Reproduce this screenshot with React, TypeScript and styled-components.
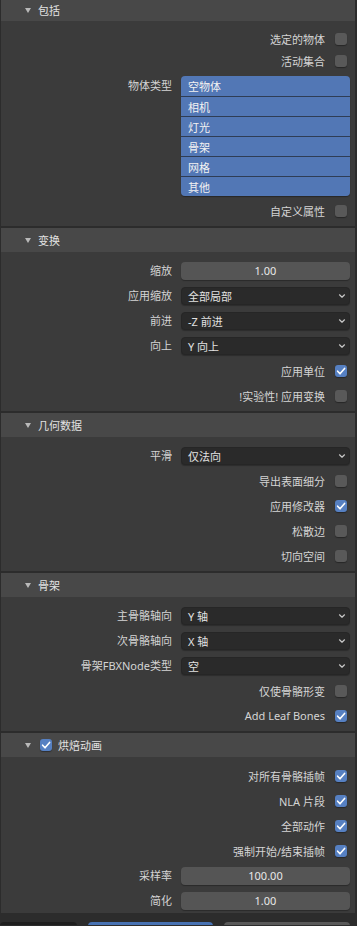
import React from "react";
import styled, { createGlobalStyle } from "styled-components";

const GlobalStyle = createGlobalStyle`
  html, body {
    margin: 0;
    padding: 0;
    background: #2c2c2c;
  }
  body {
    font-family: "Noto Sans", "Noto Sans CJK SC", sans-serif;
    font-size: 11px;
  }
`;

const Page = styled.div`
  width: 357px;
  height: 926px;
  overflow: hidden;
  background: #2c2c2c;
  padding-left: 1px;
  box-sizing: border-box;
`;

const Panel = styled.section`
  width: 354px;
  margin-bottom: 2px;
`;

const Header = styled.div<{ $h?: number }>`
  height: ${(p) => p.$h ?? 24}px;
  background: #484848;
  display: flex;
  align-items: center;
  padding-left: 24px;
  color: #e2e2e2;
  line-height: 1;
`;

const Triangle = styled.svg`
  width: 6px;
  height: 5px;
  margin-right: 7px;
  flex: none;
`;

const Body = styled.div<{ $pt?: number; $pb?: number }>`
  background: #3b3b3b;
  padding-top: ${(p) => p.$pt ?? 6}px;
  padding-bottom: ${(p) => p.$pb ?? 3}px;
`;

const FieldRow = styled.div<{ $mt?: number }>`
  height: 25px;
  display: grid;
  grid-template-columns: 171px 169px;
  column-gap: 9px;
  align-items: center;
  margin-top: ${(p) => p.$mt ?? 0}px;
`;

const ListRow = styled.div`
  display: grid;
  grid-template-columns: 171px 169px;
  column-gap: 9px;
  align-items: start;
  margin-top: 4px;
`;

const Label = styled.span<{ $lh?: number }>`
  text-align: right;
  color: #d4d4d4;
  white-space: nowrap;
  line-height: ${(p) => p.$lh ?? 14}px;
`;

const CheckRow = styled.div<{ $h?: number; $mt?: number }>`
  height: ${(p) => p.$h ?? 25}px;
  margin-top: ${(p) => p.$mt ?? 0}px;
  display: flex;
  justify-content: flex-end;
  align-items: center;
  gap: 10px;
  padding-right: 8px;
  color: #d4d4d4;
  white-space: nowrap;
`;

const Box = styled.span<{ $on?: boolean }>`
  width: 12px;
  height: 12px;
  border-radius: 3px;
  background: ${(p) => (p.$on ? "#5680c2" : "#595959")};
  box-shadow: 0 1px 1px rgba(0, 0, 0, 0.35);
  display: flex;
  align-items: center;
  justify-content: center;
  flex: none;
`;

const HeaderBox = styled(Box)`
  margin-left: 2px;
  margin-right: 6px;
`;

const NumberField = styled.div`
  height: 18px;
  border-radius: 4px;
  background: #555555;
  color: #e8e8e8;
  display: flex;
  align-items: center;
  justify-content: center;
  box-shadow: 0 1px 1px rgba(0, 0, 0, 0.3);
`;

const Dropdown = styled.div`
  height: 18px;
  box-sizing: border-box;
  border-radius: 4px;
  background: #2a2a2a;
  border: 1px solid #262626;
  color: #e2e2e2;
  display: flex;
  align-items: center;
  justify-content: space-between;
  padding: 0 3px 0 6px;
  box-shadow: 0 1px 1px rgba(0, 0, 0, 0.25);
`;

const List = styled.div`
  border-radius: 4px;
  overflow: hidden;
  box-shadow: 0 1px 1px rgba(0, 0, 0, 0.35);
`;

const ListItem = styled.div`
  height: 20px;
  box-sizing: border-box;
  background: #5277b5;
  color: #f2f2f2;
  padding-left: 7px;
  display: flex;
  align-items: center;
  & + & {
    border-top: 1px solid #2f3d55;
  }
`;

const Footer = styled.div`
  height: 12px;
  margin-left: -1px;
  padding-top: 9px;
  box-sizing: border-box;
  display: flex;
  gap: 11px;
  overflow: hidden;
  background: #2c2c2c;
`;

const FooterButton = styled.div<{ $w: number; $bg: string }>`
  width: ${(p) => p.$w}px;
  height: 20px;
  flex: none;
  border-radius: 4px;
  background: ${(p) => p.$bg};
`;

function Check() {
  return (
    <svg width="12" height="12" viewBox="0 0 12 12">
      <polyline
        points="2.6,6.2 5,8.8 9.6,3.4"
        fill="none"
        stroke="#ffffff"
        strokeWidth="1.6"
        strokeLinecap="round"
        strokeLinejoin="round"
      />
    </svg>
  );
}

function Chevron() {
  return (
    <svg width="8" height="6" viewBox="0 0 8 6">
      <polyline
        points="1.5,1.8 4,4.2 6.5,1.8"
        fill="none"
        stroke="#c8c8c8"
        strokeWidth="1.2"
        strokeLinecap="round"
        strokeLinejoin="round"
      />
    </svg>
  );
}

function Caret() {
  return (
    <Triangle viewBox="0 0 6 5">
      <polygon points="0,0 6,0 3,5" fill="#b9b9b9" />
    </Triangle>
  );
}

type Row =
  | { kind: "check"; label: string; on?: boolean }
  | { kind: "number"; label: string; value: string }
  | { kind: "enum"; label: string; value: string };

function Rows({ rows }: { rows: Row[] }) {
  return (
    <>
      {rows.map((r, i) =>
        r.kind === "check" ? (
          <CheckRow key={i}>
            <span>{r.label}</span>
            <Box $on={r.on}>{r.on && <Check />}</Box>
          </CheckRow>
        ) : (
          <FieldRow key={i}>
            <Label>{r.label}</Label>
            {r.kind === "number" ? (
              <NumberField>{r.value}</NumberField>
            ) : (
              <Dropdown>
                <span>{r.value}</span>
                <Chevron />
              </Dropdown>
            )}
          </FieldRow>
        )
      )}
    </>
  );
}

const objectTypes = ["空物体", "相机", "灯光", "骨架", "网格", "其他"];

const transformRows: Row[] = [
  { kind: "number", label: "缩放", value: "1.00" },
  { kind: "enum", label: "应用缩放", value: "全部局部" },
  { kind: "enum", label: "前进", value: "-Z 前进" },
  { kind: "enum", label: "向上", value: "Y 向上" },
  { kind: "check", label: "应用单位", on: true },
  { kind: "check", label: "!实验性! 应用变换" },
];

const geometryRows: Row[] = [
  { kind: "enum", label: "平滑", value: "仅法向" },
  { kind: "check", label: "导出表面细分" },
  { kind: "check", label: "应用修改器", on: true },
  { kind: "check", label: "松散边" },
  { kind: "check", label: "切向空间" },
];

const armatureRows: Row[] = [
  { kind: "enum", label: "主骨骼轴向", value: "Y 轴" },
  { kind: "enum", label: "次骨骼轴向", value: "X 轴" },
  { kind: "enum", label: "骨架FBXNode类型", value: "空" },
  { kind: "check", label: "仅使骨骼形变" },
  { kind: "check", label: "Add Leaf Bones", on: true },
];

const bakeRows: Row[] = [
  { kind: "check", label: "对所有骨骼插帧", on: true },
  { kind: "check", label: "NLA 片段", on: true },
  { kind: "check", label: "全部动作", on: true },
  { kind: "check", label: "强制开始/结束插帧", on: true },
  { kind: "number", label: "采样率", value: "100.00" },
  { kind: "number", label: "简化", value: "1.00" },
];

export default function App() {
  return (
    <>
      <GlobalStyle />
      <Page>
        <Panel>
          <Header $h={21}>
            <Caret />
            <span>包括</span>
          </Header>
          <Body $pt={7} $pb={3}>
            <CheckRow $h={22}>
              <span>选定的物体</span>
              <Box />
            </CheckRow>
            <CheckRow $h={22}>
              <span>活动集合</span>
              <Box />
            </CheckRow>
            <ListRow>
              <Label $lh={20}>物体类型</Label>
              <List>
                {objectTypes.map((t) => (
                  <ListItem key={t}>{t}</ListItem>
                ))}
              </List>
            </ListRow>
            <CheckRow $mt={2}>
              <span>自定义属性</span>
              <Box />
            </CheckRow>
          </Body>
        </Panel>

        <Panel>
          <Header>
            <Caret />
            <span>变换</span>
          </Header>
          <Body>
            <Rows rows={transformRows} />
          </Body>
        </Panel>

        <Panel>
          <Header>
            <Caret />
            <span>几何数据</span>
          </Header>
          <Body>
            <Rows rows={geometryRows} />
          </Body>
        </Panel>

        <Panel>
          <Header>
            <Caret />
            <span>骨架</span>
          </Header>
          <Body>
            <Rows rows={armatureRows} />
          </Body>
        </Panel>

        <Panel style={{ marginBottom: 0 }}>
          <Header>
            <Caret />
            <HeaderBox $on>
              <Check />
            </HeaderBox>
            <span>烘焙动画</span>
          </Header>
          <Body $pb={0}>
            <Rows rows={bakeRows} />
          </Body>
        </Panel>

        <Footer>
          <FooterButton $w={77} $bg="#1e1e1e" />
          <FooterButton $w={125} $bg="#4772b3" />
          <FooterButton $w={126} $bg="#595959" />
        </Footer>
      </Page>
    </>
  );
}
